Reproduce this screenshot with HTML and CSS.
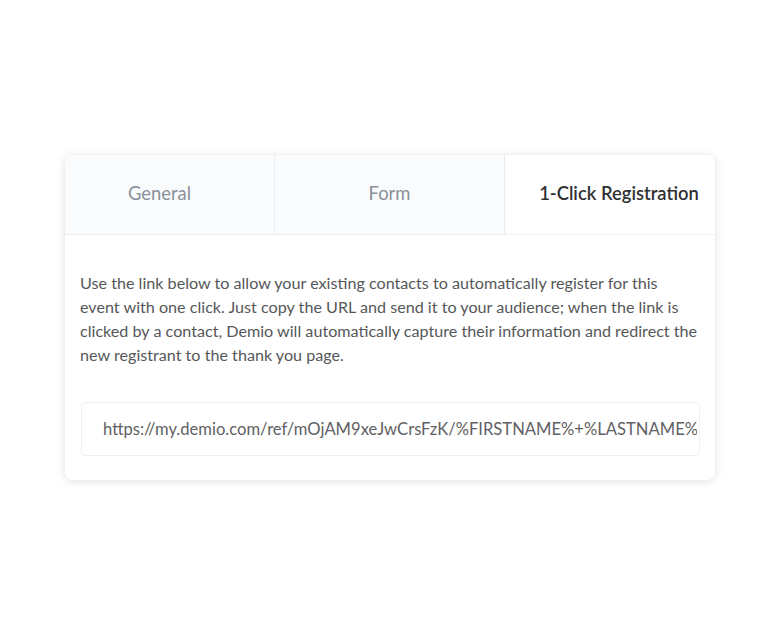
FILE: index.html
```html
<!DOCTYPE html>
<html>
<head>
<meta charset="utf-8">
<link rel="stylesheet" href="styles.css">
</head>
<body>
<div class="page">
  <div class="card">
    <div class="tabs">
      <div class="tab tab-general">General</div>
      <div class="tab tab-form">Form</div>
      <div class="tab tab-active">1-Click Registration</div>
    </div>
    <div class="content">
      <p class="desc">Use the link below to allow your existing contacts to automatically register for this<br>event with one click. Just copy the URL and send it to your audience; when the link is<br>clicked by a contact, Demio will automatically capture their information and redirect the<br>new registrant to the thank you page.</p>
      <div class="url-box"><span class="url">https://my.demio.com/ref/mOjAM9xeJwCrsFzK/%FIRSTNAME%+%LASTNAME%+%EMAIL%</span></div>
    </div>
  </div>
</div>
</body>
</html>
```
FILE: styles.css
```css
html, body {
  margin: 0;
  padding: 0;
  background: #ffffff;
}
body {
  font-family: Lato, "Open Sans", sans-serif;
  width: 780px;
  height: 636px;
  overflow: hidden;
}
.page {
  padding-top: 155px;
  padding-left: 65px;
}
.card {
  width: 650px;
  height: 325px;
  box-sizing: border-box;
  background: #ffffff;
  border-radius: 8px;
  box-shadow: 0 1px 10px rgba(0, 0, 0, 0.13);
  overflow: hidden;
}
.tabs {
  display: flex;
  height: 80px;
}
.tab {
  box-sizing: border-box;
  display: flex;
  align-items: center;
  justify-content: center;
  font-size: 18.4px;
  color: #8a9099;
  background: #f9fbfd;
  border-bottom: 1px solid #e8edf3;
  padding-bottom: 4px;
  white-space: nowrap;
}
.tab-general {
  width: 210px;
  border-right: 1px solid #e8edf3;
  padding-right: 20px;
}
.tab-form {
  width: 230px;
  border-right: 1px solid #e8edf3;
}
.tab-active {
  width: 210px;
  background: #ffffff;
  color: #2f3133;
  font-weight: 600;
  border-bottom-color: #eef2f6;
  padding-left: 18px;
}
.content {
  padding: 36px 15px 24px 15px;
}
.desc {
  margin: 0 -12px 0 0;
  font-size: 16.15px;
  line-height: 24px;
  color: #555759;
}
.url-box {
  margin-top: 35px;
  margin-left: 1px;
  height: 54px;
  box-sizing: border-box;
  border: 1px solid #edf0f4;
  border-radius: 4px;
  display: flex;
  align-items: center;
  padding: 0 1px 0 21px;
  overflow: hidden;
}
.url {
  font-size: 16.6px;
  color: #5f6163;
  white-space: nowrap;
  overflow: hidden;
  display: block;
  width: 594px;
}
```
